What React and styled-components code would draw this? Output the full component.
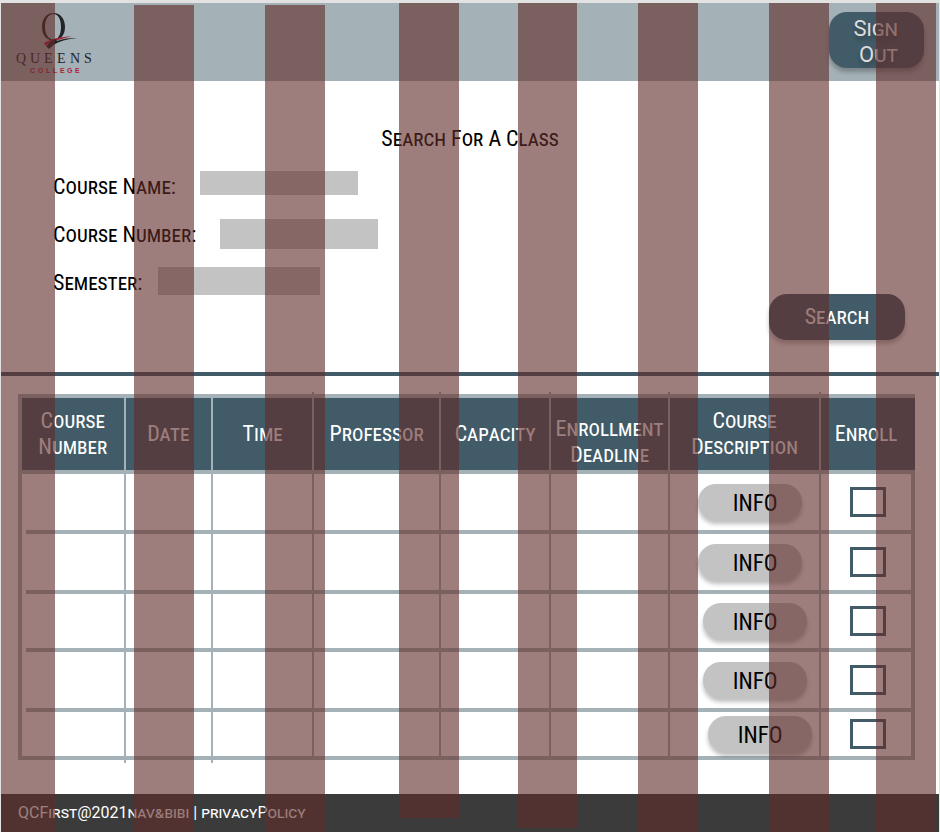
import React from "react";
import styled, { createGlobalStyle } from "styled-components";

const teal = "#415b68";
const mist = "#a4b1b7";
const silver = "#c3c3c3";

const GlobalStyle = createGlobalStyle`
  *, *::before, *::after { box-sizing: border-box; }
  body { margin: 0; background: #fff; }
`;

const Page = styled.div`
  position: relative;
  display: flex;
  flex-direction: column;
  min-height: 100vh;
  border: solid #e2e2e2;
  border-width: 3px 1px 0;
  font: 22px/26px "Roboto Condensed", Roboto, sans-serif;
  font-variant: small-caps;
  color: #000;
  overflow: hidden;
`;

const Header = styled.header`
  display: flex;
  justify-content: space-between;
  align-items: flex-start;
  padding: 9px 15px 3px 12px;
  background: ${mist};
`;

const Button = styled.button`
  border: 0;
  border-radius: 18px;
  background: ${teal};
  color: #fff;
  font: inherit;
  box-shadow: 0 4px 4px rgba(0, 0, 0, 0.25);
  cursor: pointer;
`;

const SignOut = styled(Button)`
  width: 95px;
  height: 56px;
  padding: 4px 26px 2px 16px;
  font-family: Roboto, sans-serif;
  color: #dcdcdc;
  text-align: right;
  text-shadow: 0 4px 4px rgba(0, 0, 0, 0.25);
`;

const Search = styled.main`
  padding: 42px 34px 32px 52px;
`;

const Title = styled.h1`
  margin: 0 0 16px;
  padding-right: 18px;
  font: inherit;
  line-height: 32px;
  text-align: center;
`;

const Form = styled.form`
  display: flex;
  justify-content: space-between;
  align-items: flex-end;
`;

const Fields = styled.div`
  display: flex;
  flex-direction: column;
  gap: 16px;
  padding-bottom: 41px;
`;

const Field = styled.div`
  display: flex;
  align-items: flex-start;
  gap: ${(p) => p.$gap}px;
  height: 32px;
`;

const Label = styled.label`
  line-height: 32px;
`;

const TextBox = styled.input`
  width: ${(p) => p.$width}px;
  height: ${(p) => p.$height}px;
  padding: 0 8px;
  border: 0;
  background: ${silver};
  font: 16px Roboto, sans-serif;
`;

const SearchButton = styled(Button)`
  width: 136px;
  height: 46px;
`;

const Divider = styled.hr`
  width: 100%;
  height: 4px;
  margin: 0 0 18px;
  border: 0;
  background: ${teal};
`;

const TableWrap = styled.section`
  padding: 0 24px 34px 17px;
`;

const Table = styled.table`
  width: 100%;
  table-layout: fixed;
  border: 4px solid ${mist};
  border-spacing: 0;
`;

const HeadCell = styled.th`
  position: relative;
  height: 76px;
  padding: 0 0 ${(p) => (p.$low ? 2 : 0)}px;
  border-bottom: 4px solid ${mist};
  border-right: 2px solid ${mist};
  background: ${teal};
  color: #fff;
  font-weight: 400;
  vertical-align: ${(p) => (p.$low ? "bottom" : "middle")};

  &:last-child { border-right: 0; }

  &:last-child::after {
    content: "";
    position: absolute;
    top: 0;
    bottom: 0;
    right: -4px;
    width: 4px;
    background: ${teal};
  }

  &:nth-child(n + 3):not(:last-child)::before {
    content: "";
    position: absolute;
    top: -6px;
    right: -2px;
    width: 2px;
    height: 6px;
    background: ${mist};
  }
`;

const Row = styled.tr`
  height: ${(p) => p.$height}px;

  &:not(:last-child) > td {
    background: linear-gradient(${mist}, ${mist}) right bottom / 100% 4px no-repeat;
  }
  &:not(:last-child) > td:first-child {
    background-size: calc(100% - 4px) 4px;
  }
  &:last-child > td:nth-child(-n + 2)::after {
    content: "";
    position: absolute;
    right: -2px;
    bottom: -7px;
    width: 2px;
    height: 7px;
    background: ${mist};
  }
`;

const Cell = styled.td`
  position: relative;
  padding: 0 0 ${(p) => (p.$lined ? 4 : 0)}px ${(p) => p.$indent || 0}px;
  border-right: 2px solid ${mist};
  vertical-align: middle;
  line-height: 0;

  &:last-child { border-right: 0; }
`;

const InfoButton = styled(Button)`
  width: 104px;
  height: 36px;
  padding: 4px 0 0 ${(p) => (p.$wide ? 10 : 0)}px;
  background: ${silver};
  color: #000;
  font-size: 23px;
  font-variant: normal;
  line-height: 26px;
`;

const Tick = styled.input`
  appearance: none;
  display: block;
  width: 36px;
  height: 30px;
  margin: 0;
  border: 3px solid ${teal};
  cursor: pointer;

  &:checked { background: ${teal}; }
`;

const Footer = styled.footer`
  flex: 1;
  display: flex;
  gap: 4px;
  padding: 6px 17px;
  background: #3b3b3b;
  color: #fff;
  font: 16px/26px Roboto, sans-serif;
  font-variant: small-caps;
`;

const FooterLink = styled.a`
  color: inherit;
  text-decoration: none;
`;

const Columns = styled.div`
  position: absolute;
  inset: 0;
  display: grid;
  grid-template-columns:
    54fr 79fr 60fr 71fr 60fr 74fr 60fr 60fr 59fr 61fr 60fr 71fr 60fr 47fr 60fr 3fr;
  pointer-events: none;
`;

const Stripe = styled.div`
  grid-column: ${(p) => p.$column};
  margin: ${(p) => p.$top || 0}px 0 ${(p) => p.$bottom || 0}px;
  background: rgba(97, 44, 41, 0.61);
`;

const stripes = [
  { column: 1 },
  { column: 3, top: 2 },
  { column: 5, top: 2 },
  { column: 7, bottom: 14 },
  { column: 9, bottom: 4 },
  { column: 11 },
  { column: 13 },
  { column: 15 },
];

const fields = [
  { id: "name", label: "Course Name:", gap: 24, width: 158, height: 24 },
  { id: "number", label: "Course Number:", gap: 24, width: 158, height: 30 },
  { id: "semester", label: "Semester:", gap: 16, width: 162, height: 28 },
];

const columns = [
  { label: "Course Number", width: "11.65%" },
  { label: "Date", width: "9.85%" },
  { label: "Time", width: "11.36%" },
  { label: "Professor", width: "14.29%" },
  { label: "Capacity", width: "12.37%" },
  { label: "Enrollment Deadline", width: "13.39%", low: true },
  { label: "Course Description", width: "16.98%" },
  { label: "Enroll" },
];

const rows = [
  { height: 60, indent: 28, wide: true },
  { height: 60, indent: 28, wide: true },
  { height: 58, indent: 33 },
  { height: 60, indent: 33 },
  { height: 44, indent: 38 },
];

const Logo = () => (
  <svg width="80" height="66" viewBox="0 0 80 66" role="img" aria-label="Queens College">
    <path
      fillRule="evenodd"
      fill="#222426"
      d="M40.500 1C33.500 1 29 7 29 15s4.500 13.500 11.500 13.500S52 23 52 15 47.500 1 40.500 1Zm0 1c4.500 0 7.500 5 7.500 13s-3 12.500-7.500 12.500S32 23 32 15s3.500-13 8.500-13Z"
    />
    <path fill="#a8213b" d="M31 31C38 27 48 24.500 59 24.500 50 26 42 28.500 32 33.500Z" />
    <path fill="#222426" d="M33 34 40 28 43 27 44 29C50 26.500 57 25.500 64 26 54 27 46 29.500 40.500 33L36 37Z" />
    <g fill="#222426" fontFamily="Liberation Serif, serif" fontSize="14">
      <text y="51" x="3 17 31 44 57 71">QUEENS</text>
    </g>
    <g fill="#b01e3c" fontFamily="Liberation Sans, sans-serif" fontSize="7" fontWeight="700">
      <text y="61" x="17 25 33 40 47 54 62">COLLEGE</text>
    </g>
  </svg>
);

export default function App() {
  return (
    <Page>
      <GlobalStyle />
      <Header>
        <Logo />
        <SignOut type="button">Sign Out</SignOut>
      </Header>
      <Search>
        <Title>Search For A Class</Title>
        <Form onSubmit={(e) => e.preventDefault()}>
          <Fields>
            {fields.map((f) => (
              <Field key={f.id} $gap={f.gap}>
                <Label htmlFor={f.id}>{f.label}</Label>
                <TextBox id={f.id} $width={f.width} $height={f.height} />
              </Field>
            ))}
          </Fields>
          <SearchButton type="submit">Search</SearchButton>
        </Form>
      </Search>
      <Divider />
      <TableWrap>
        <Table>
          <colgroup>
            {columns.map((c) => (
              <col key={c.label} width={c.width} />
            ))}
          </colgroup>
          <thead>
            <tr>
              {columns.map((c) => (
                <HeadCell key={c.label} scope="col" $low={c.low}>
                  {c.label}
                </HeadCell>
              ))}
            </tr>
          </thead>
          <tbody>
            {rows.map((r, i) => {
              const lined = i < rows.length - 1;
              return (
                <Row key={i} $height={r.height}>
                  {columns.slice(0, 6).map((c) => (
                    <Cell key={c.label} $lined={lined} />
                  ))}
                  <Cell $lined={lined} $indent={r.indent}>
                    <InfoButton type="button" $wide={r.wide}>INFO</InfoButton>
                  </Cell>
                  <Cell $lined={lined} $indent={29}>
                    <Tick type="checkbox" aria-label={`Enroll in course ${i + 1}`} />
                  </Cell>
                </Row>
              );
            })}
          </tbody>
        </Table>
      </TableWrap>
      <Footer>
        <span>QCFirst@2021nav&amp;bibi</span>
        <span>|</span>
        <FooterLink href="#privacy">privacyPolicy</FooterLink>
      </Footer>
      <Columns aria-hidden="true">
        {stripes.map((s) => (
          <Stripe key={s.column} $column={s.column} $top={s.top} $bottom={s.bottom} />
        ))}
      </Columns>
    </Page>
  );
}
